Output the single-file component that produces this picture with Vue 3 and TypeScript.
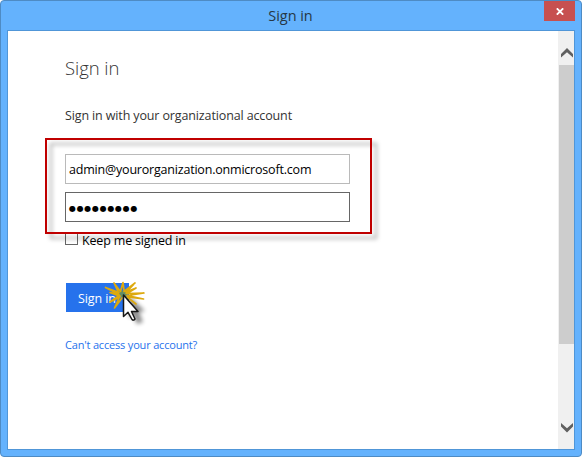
<script setup lang="ts">
import { ref } from 'vue'

const account = ref('admin@yourorganization.onmicrosoft.com')
const password = ref('●●●●●●●●●')
</script>

<template>
  <div class="window">
    <header class="titlebar">
      <span class="caption">Sign in</span>
      <button class="close" aria-label="Close">
        <svg width="8" height="7" viewBox="0 0 8 7"><path d="M.8 .3 7.2 6.7M7.2 .3 .8 6.7" stroke="#fff" stroke-width="1.8" /></svg>
      </button>
    </header>
    <div class="client">
      <main class="content">
        <h1><span>Sign in</span></h1>
        <p class="intro">Sign in with your organizational account</p>
        <div class="fields">
          <div class="field"><span class="account">{{ account }}</span></div>
          <div class="field active"><span class="dots">{{ password }}</span></div>
          <div class="highlight"></div>
        </div>
        <label class="keep"><i class="box"></i><span>Keep me signed in</span></label>
        <button class="submit">
          <span>Sign in</span>
          <svg class="pointer" width="54" height="54" viewBox="0 0 54 54">
            <defs>
              <filter id="soft" x="-50%" y="-50%" width="200%" height="200%"><feGaussianBlur stdDeviation="2" /></filter>
            </defs>
            <path d="M23 16 39 31 33 32 37 42 31 44 27 35 23 38Z" transform="translate(6 1)" fill="#000" opacity=".45" filter="url(#soft)" />
            <ellipse cx="22.500" cy="15" rx="4.500" ry="3.500" fill="#779638" opacity=".75" />
            <path d="M20 12 14 4 18.500 13.500M19 13.500 5.500 8.500 19 15.500M19 15.500 10 13.500 19 17M19 16.500 10 23 20 18M20 17 14.500 29 22 19M20.500 12.500 23 3.500 24 11.500M24 12.500 35 4 27 12.500M26 13 36 9 27 14.500M26 14.500 44 14 28 16.500M27 16.500 43.500 20 28 18M27 18 36 25" fill="none" stroke="#dda90e" stroke-width="1.7" stroke-linecap="round" stroke-linejoin="round" />
            <path d="M23.500 16V37.500L28 33.300 32 40.500Q33.500 42 35 40L31.500 32.500H38Z" fill="#fff" stroke="#171717" stroke-width="1.5" stroke-linejoin="round" />
          </svg>
        </button>
        <a class="help">Can't access your account?</a>
      </main>
      <aside class="scrollbar">
        <div class="arrow up"><svg width="12" height="10" viewBox="0 0 12 10"><path d="M0 6 6 0 12 6V9.500L6 4.200 0 9.500Z" fill="#606060" /></svg></div>
        <div class="thumb"></div>
        <div class="arrow down"><svg width="12" height="10" viewBox="0 0 12 10"><path d="M0 0 6 5.300 12 0V3.500L6 9.500 0 3.500Z" fill="#606060" /></svg></div>
      </aside>
    </div>
  </div>
</template>

<style>
body { margin: 0; background: #fff; }
</style>

<style scoped>
* { box-sizing: border-box; }
.window {
  width: 582px; height: 457px; padding: 0 6px 6px;
  display: flex; flex-direction: column;
  border: 1px solid #4e8bc4; border-radius: 4px;
  background: #64b2fd; font-family: "Open Sans", "Noto Sans", sans-serif; color: #000;
}
.titlebar { height: 29px; flex: none; display: grid; grid-template-columns: 31px 1fr 31px; align-items: start; }
.caption { grid-column: 2; text-align: center; font-size: 14.5px; line-height: 30px; letter-spacing: -.05px; color: #263745; padding-right: 1px; }
button { border: 0; padding: 0; font-family: inherit; }
.close { height: 20px; background: #c75050; display: flex; align-items: center; justify-content: center; padding-top: 1px; padding-left: 1px; }
.client { flex: 1; display: flex; background: #fff; border: 1px solid #5096d8; }
.content { flex: 1; padding: 22px 0 0 57px; display: flex; flex-direction: column; align-items: flex-start; }
h1 { margin: 0; height: 30px; font-size: 18.5px; font-weight: 300; line-height: 30px; color: #333; letter-spacing: -.05px; }
.intro { margin: 23px 0 0; height: 20px; line-height: 20px; font-size: 12.5px; letter-spacing: -.13px; color: #333; white-space: nowrap; }
.fields { position: relative; margin-top: 28px; display: flex; flex-direction: column; gap: 8px; }
.field { width: 285px; height: 30px; border: 1px solid #bababa; padding-left: 3px; display: flex; align-items: center; font-size: 12.5px; white-space: nowrap; }
.field.active { border-color: #666; }
.account { letter-spacing: -.2px; }
.dots { font-family: "DejaVu Sans", sans-serif; font-size: 8px; letter-spacing: .7px; padding-top: 2px; }
.highlight { position: absolute; left: -20px; top: -16px; width: 327px; height: 96px; border: 2px solid #c00000; filter: drop-shadow(5px 5px 2px rgba(0, 0, 0, .33)); z-index: 1; }
.keep { margin-top: 8px; height: 20px; display: flex; align-items: flex-start; gap: 4px; font-size: 12.5px; letter-spacing: -.17px; line-height: 21px; }
.box { width: 13px; height: 13px; margin-top: 2px; border: 1px solid #666; background: #fff; }
.submit { position: relative; margin: 33px 0 0 1px; width: 63px; height: 29px; background: #2672ec; color: #fff; font-size: 12.5px; line-height: 31px; padding-left: 12px; text-align: left; letter-spacing: -.1px; white-space: nowrap; }
.pointer { position: absolute; left: 34px; top: -4px; }
.help { margin-top: 23px; line-height: 20px; font-size: 11px; letter-spacing: -.18px; color: #2672ec; }
.scrollbar { width: 16px; flex: none; background: #f0f0f0; display: flex; flex-direction: column; }
.arrow { display: flex; justify-content: center; padding-left: 1px; }
.up { height: 34px; padding-top: 17px; }
.thumb { height: 279px; margin-left: 1px; background: #cdcdcd; }
.down { padding-top: 79px; }
</style>
